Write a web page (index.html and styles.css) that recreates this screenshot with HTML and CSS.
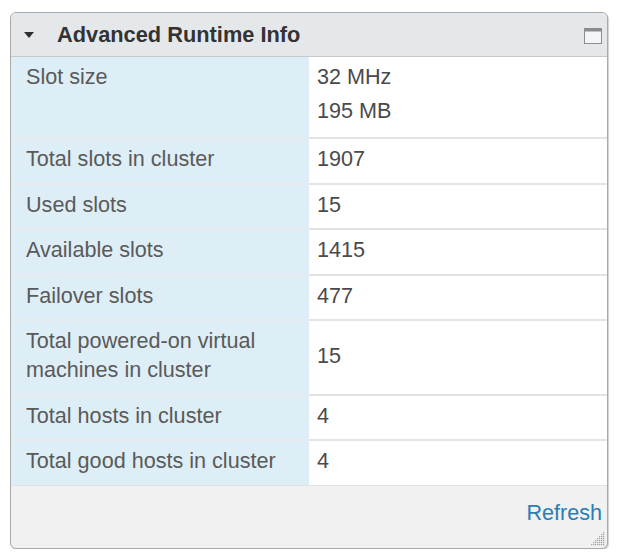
FILE: index.html
```html
<!DOCTYPE html>
<html>
<head>
<meta charset="utf-8">
<link rel="stylesheet" href="styles.css">
</head>
<body>
<div class="panel">
  <div class="panel-header">
    <span class="caret"></span>
    <span class="title">Advanced Runtime Info</span>
    <svg class="max-icon" width="18" height="16" viewBox="0 0 18 16">
      <rect x="0.5" y="0.5" width="17" height="15" fill="#f4f5f6" stroke="#8c8c8c"/>
      <rect x="1" y="1" width="16" height="2.5" fill="#8c8c8c"/>
    </svg>
  </div>
  <div class="grid">
    <div class="label first slot">Slot size</div>
    <div class="value first slot">
      <div>32 MHz</div>
      <div class="line2">195 MB</div>
    </div>
    <div class="label">Total slots in cluster</div>
    <div class="value">1907</div>
    <div class="label">Used slots</div>
    <div class="value">15</div>
    <div class="label">Available slots</div>
    <div class="value">1415</div>
    <div class="label">Failover slots</div>
    <div class="value">477</div>
    <div class="label">Total powered-on virtual<br>machines in cluster</div>
    <div class="value">15</div>
    <div class="label">Total hosts in cluster</div>
    <div class="value">4</div>
    <div class="label">Total good hosts in cluster</div>
    <div class="value">4</div>
  </div>
  <div class="footer">
    <a class="refresh" href="#">Refresh</a>
    <svg class="grip" width="16" height="16" viewBox="0 0 16 16">
      <g fill="#a0a0a0">
        <rect x="13" y="1" width="1.2" height="1.2"/>
        <rect x="11" y="3" width="1.2" height="1.2"/>
        <rect x="13" y="3" width="1.2" height="1.2"/>
        <rect x="9" y="5" width="1.2" height="1.2"/>
        <rect x="11" y="5" width="1.2" height="1.2"/>
        <rect x="13" y="5" width="1.2" height="1.2"/>
        <rect x="7" y="7" width="1.2" height="1.2"/>
        <rect x="9" y="7" width="1.2" height="1.2"/>
        <rect x="11" y="7" width="1.2" height="1.2"/>
        <rect x="13" y="7" width="1.2" height="1.2"/>
        <rect x="5" y="9" width="1.2" height="1.2"/>
        <rect x="7" y="9" width="1.2" height="1.2"/>
        <rect x="9" y="9" width="1.2" height="1.2"/>
        <rect x="11" y="9" width="1.2" height="1.2"/>
        <rect x="13" y="9" width="1.2" height="1.2"/>
        <rect x="3" y="11" width="1.2" height="1.2"/>
        <rect x="5" y="11" width="1.2" height="1.2"/>
        <rect x="7" y="11" width="1.2" height="1.2"/>
        <rect x="9" y="11" width="1.2" height="1.2"/>
        <rect x="11" y="11" width="1.2" height="1.2"/>
        <rect x="13" y="11" width="1.2" height="1.2"/>
        <rect x="1" y="13" width="1.2" height="1.2"/>
        <rect x="3" y="13" width="1.2" height="1.2"/>
        <rect x="5" y="13" width="1.2" height="1.2"/>
        <rect x="7" y="13" width="1.2" height="1.2"/>
        <rect x="9" y="13" width="1.2" height="1.2"/>
        <rect x="11" y="13" width="1.2" height="1.2"/>
        <rect x="13" y="13" width="1.2" height="1.2"/>
      </g>
    </svg>
  </div>
</div>
</body>
</html>
```

FILE: styles.css
```css
html, body {
  margin: 0;
  background: #ffffff;
}
body {
  padding: 12px 0 0 10px;
  font-family: "Liberation Sans", Arial, sans-serif;
}
.panel {
  width: 596px;
  height: 535px;
  border: 1px solid #a9a9a9;
  border-radius: 6px;
  box-shadow: 1px 1px 1px rgba(0, 0, 0, 0.18);
  background: #f1f1f1;
  display: flex;
  flex-direction: column;
  overflow: hidden;
}
.panel-header {
  height: 43px;
  flex: none;
  display: flex;
  align-items: center;
  padding: 0 5px 0 13px;
  background: #e5e8ea;
  border-bottom: 1px solid #c6c8ca;
}
.caret {
  width: 0;
  height: 0;
  border-left: 5.5px solid transparent;
  border-right: 5.5px solid transparent;
  border-top: 6px solid #2e2e2e;
  margin-top: 1px;
}
.title {
  margin-left: 23px;
  font-weight: bold;
  font-size: 21.8px;
  color: #333333;
  flex: 1;
}
.max-icon {
  display: block;
  margin-top: 3px;
}
.grid {
  display: grid;
  grid-template-columns: 298px 298px;
  background: #ffffff;
  border-bottom: 1px solid #e2e2e2;
  flex: none;
}
.label, .value {
  font-size: 21.6px;
  line-height: 29px;
  padding: 5px 8px 9.5px 8px;
  border-top: 2px solid #e3e4e5;
}
.label {
  background: #deeef6;
  color: #5a5a5a;
  padding-left: 15px;
  border-top-color: #e6ebee;
}
.value {
  background: #ffffff;
  color: #4a4a4a;
  display: flex;
  flex-direction: column;
  justify-content: center;
}
.first {
  border-top: none;
}
.slot {
  padding-bottom: 12px;
}
.value.slot {
  justify-content: flex-start;
}
.line2 {
  margin-top: 5px;
}
.footer {
  flex: 1;
  position: relative;
  display: flex;
  justify-content: flex-end;
  align-items: flex-start;
  padding: 12px 5px 0 0;
}
.refresh {
  font-size: 21.6px;
  line-height: 29px;
  color: #2b7db2;
  text-decoration: none;
}
.grip {
  position: absolute;
  right: 1px;
  bottom: 1px;
}
```
